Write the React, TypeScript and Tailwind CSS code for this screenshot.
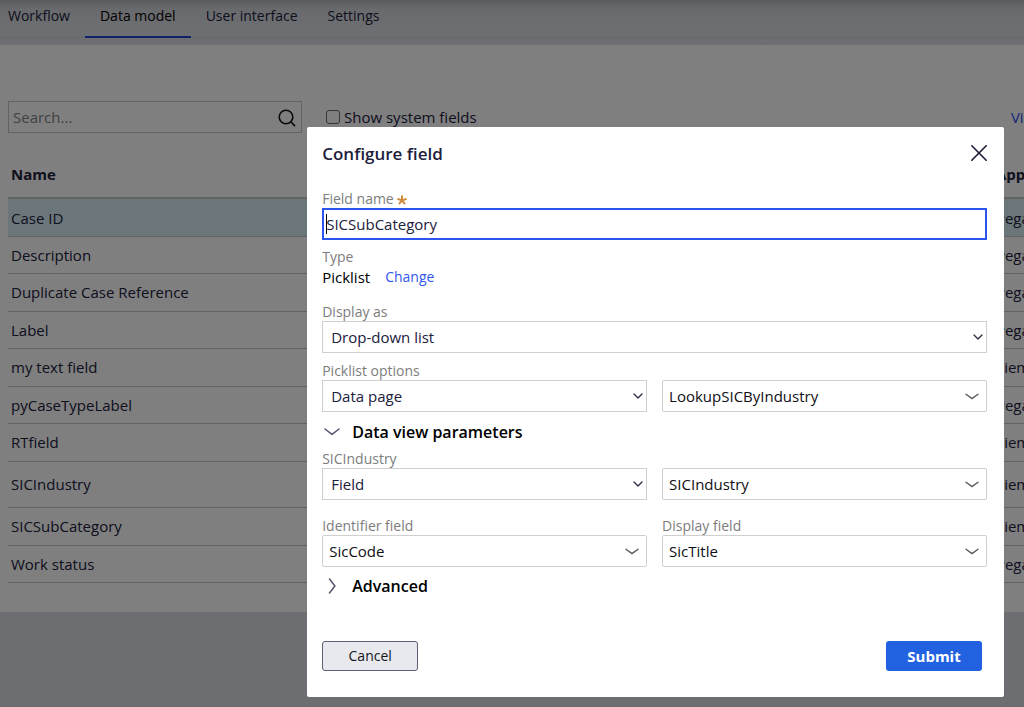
import { useState } from "react";

const tabs = ["Workflow", "Data model", "User interface", "Settings"];

const rows = [
  { name: "Case ID", layer: "Pega", selected: true },
  { name: "Description", layer: "Pega" },
  { name: "Duplicate Case Reference", layer: "Pega" },
  { name: "Label", layer: "Pega" },
  { name: "my text field", layer: "Siem" },
  { name: "pyCaseTypeLabel", layer: "Pega" },
  { name: "RTfield", layer: "Siem" },
  { name: "SICIndustry", layer: "Siem", tall: true },
  { name: "SICSubCategory", layer: "Siem" },
  { name: "Work status", layer: "Pega" },
];

function SmallChevron() {
  return (
    <svg viewBox="0 0 10 6" className="pointer-events-none absolute right-1 top-[13px] h-[6px] w-[10px]" fill="none" stroke="#2b2b45" strokeWidth="1.3" strokeLinecap="round" strokeLinejoin="round">
      <path d="M1 1l4 4 4-4" />
    </svg>
  );
}

function WideChevron() {
  return (
    <svg viewBox="0 0 14 7" className="pointer-events-none absolute right-2 top-[13px] h-[7px] w-[14px]" fill="none" stroke="#5c5c5c" strokeWidth="1.4" strokeLinecap="round" strokeLinejoin="round">
      <path d="M1 1.2l6 4.4 6-4.4" />
    </svg>
  );
}

type PickerProps = {
  id: string;
  label?: string;
  ariaLabel?: string;
  value: string;
  wide?: boolean;
};

function Picker({ id, label, ariaLabel, value, wide }: PickerProps) {
  return (
    <div className="flex min-w-0 flex-1 flex-col justify-end">
      {label && (
        <label htmlFor={id} className="text-sm leading-[18px] text-[#7d7d7d]">
          {label}
        </label>
      )}
      <div className="relative">
        <select
          id={id}
          aria-label={ariaLabel}
          className={
            wide
              ? "block h-8 w-full appearance-none rounded-[2px] border border-[#cfcfcf] bg-white pl-[6px] pr-7 text-[15px] text-[#0f0f14] outline-none"
              : "block h-8 w-full appearance-none border border-[#cfcfcf] bg-white pl-2 pr-6 text-[15px] text-[#20203c] outline-none"
          }
        >
          <option>{value}</option>
        </select>
        {wide ? <WideChevron /> : <SmallChevron />}
      </div>
    </div>
  );
}

function DataModelPage() {
  return (
    <div className="min-h-screen overflow-hidden bg-[#dadce2]">
      <header className="h-[45px] bg-linear-to-b from-[#b4b5b9] via-[#d2d4d9] via-20% to-[#dadce2] to-60%">
        <nav className="flex h-[38px] border-b border-[#cfd1d1]">
          {tabs.map((tab) => (
            <a
              key={tab}
              href="#"
              className={
                tab === "Data model"
                  ? "h-[38px] border-b-2 border-[#2343d8] px-[15px] pt-[6px] text-sm leading-5 text-black"
                  : "h-[38px] px-[15px] pt-[6px] text-sm leading-5 text-[#20203c] first:pl-2"
              }
            >
              {tab}
            </a>
          ))}
        </nav>
      </header>
      <main className="h-[567px] bg-white">
        <div className="w-[108%] pl-2 pt-[56px]">
          <div className="flex h-8 items-center">
            <div className="relative w-[294px]">
              <input
                type="search"
                aria-label="Search"
                placeholder="Search..."
                className="block h-8 w-full border border-[#c4c4c4] bg-transparent pl-1 pr-8 text-[15px] outline-none placeholder:text-[#858585]"
              />
              <svg viewBox="0 0 18 18" className="absolute right-[6px] top-2 h-[18px] w-[18px]" fill="none" stroke="#15151c" strokeWidth="1.6" strokeLinecap="round">
                <circle cx="8" cy="8" r="6.8" />
                <path d="M13 13l3.6 3.6" />
              </svg>
            </div>
            <label className="ml-6 flex items-center gap-1 text-[15px] text-[#20203c]">
              <input type="checkbox" className="h-[14px] w-[14px] appearance-none rounded-[3px] border border-[#6a6a6a]" />
              Show system fields
            </label>
            <a href="#" className="ml-auto w-[95px] text-[15px] text-[#2b4df0]">
              View
            </a>
          </div>
          <table className="mt-4 w-full table-fixed border-collapse text-left text-[15px] text-[#20203c]">
            <thead>
              <tr className="h-[49px] border-b-2 border-[#c4c4c4]">
                <th className="px-[3px] pt-[2px] font-bold">Name</th>
                <th className="w-[113px] px-[3px] pt-[2px] font-bold">App</th>
              </tr>
            </thead>
            <tbody>
              {rows.map((row) => (
                <tr
                  key={row.name}
                  className={
                    row.tall
                      ? "h-[46px] border-b border-[#c4c4c4]"
                      : row.selected
                        ? "h-[38px] border-b border-[#c4c4c4] bg-[#d7edf5]"
                        : "h-[37px] border-b border-[#c4c4c4] odd:h-[38px]"
                  }
                >
                  <td className="px-[3px] pt-px">{row.name}</td>
                  <td className="px-[3px] pt-px">{row.layer}</td>
                </tr>
              ))}
            </tbody>
          </table>
        </div>
      </main>
    </div>
  );
}

function ConfigureDialog() {
  const [name, setName] = useState("SICSubCategory");
  return (
    <div role="dialog" aria-modal="true" aria-labelledby="dialog-title" className="min-w-0 flex-1 self-start rounded-[2px] bg-white pb-[26px] pl-[15px] pr-[17px]">
      <div className="flex h-[63px] items-start justify-between pt-[15px]">
        <h2 id="dialog-title" className="text-[17px] font-semibold leading-6 text-[#20203c]">
          Configure field
        </h2>
        <button type="button" aria-label="Close" className="mt-[3px]">
          <svg viewBox="0 0 16 16" className="h-4 w-4" fill="none" stroke="#1b1b38" strokeWidth="1.6" strokeLinecap="round">
            <path d="M0.8 0.8l14.4 14.4M15.2 0.8L0.8 15.2" />
          </svg>
        </button>
      </div>

      <div className="flex items-center gap-[3px]">
        <label htmlFor="field-name" className="text-sm leading-[18px] text-[#7d7d7d]">
          Field name
        </label>
        <svg viewBox="0 0 10 10" className="mt-[2px] h-[10px] w-[10px]" fill="none" stroke="#cf8a3c" strokeWidth="2" strokeLinecap="round">
          <path d="M5 5.2V1.3M5 5.2l3.8-1.1M5 5.2l2.4 3.2M5 5.2L2.6 8.4M5 5.2L1.2 4.1" />
        </svg>
      </div>
      <div className="relative">
        <input
          id="field-name"
          value={name}
          onChange={(e) => setName(e.target.value)}
          className="block h-8 w-full border-2 border-[#2e54ee] bg-white pl-[2px] text-[15px] text-[#20203c] outline-none"
        />
        <span className="absolute left-1 top-[6px] h-5 w-px bg-black" />
      </div>

      <div className="mt-2 text-sm leading-[18px] text-[#7d7d7d]">Type</div>
      <div className="flex gap-[15px] text-[15px] leading-[22px] text-black">
        <span>Picklist</span>
        <a href="#" className="text-sm leading-[22px] text-[#3157f0]">
          Change
        </a>
      </div>

      <div className="mt-[15px] flex">
        <Picker id="display-as" label="Display as" value="Drop-down list" />
      </div>
      <div className="mt-[9px] flex gap-[15px]">
        <Picker id="picklist-options" label="Picklist options" value="Data page" />
        <Picker id="data-page" ariaLabel="Data page" value="LookupSICByIndustry" wide />
      </div>

      <button type="button" aria-expanded="true" className="flex h-[38px] items-center gap-3 pl-[2px] pt-px text-base font-semibold text-black">
        <svg viewBox="0 0 16 8" className="h-2 w-4" fill="none" stroke="#56566e" strokeWidth="1.5" strokeLinecap="round" strokeLinejoin="round">
          <path d="M1 1l7 5.4L15 1" />
        </svg>
        Data view parameters
      </button>

      <div className="flex gap-[15px]">
        <Picker id="sic-industry" label="SICIndustry" value="Field" />
        <Picker id="sic-industry-field" ariaLabel="SICIndustry field" value="SICIndustry" wide />
      </div>
      <div className="mt-[17px] flex gap-[15px]">
        <Picker id="identifier" label="Identifier field" value="SicCode" wide />
        <Picker id="display-field" label="Display field" value="SicTitle" wide />
      </div>

      <button type="button" aria-expanded="false" className="flex h-[38px] items-center gap-3 pl-[2px] text-base font-semibold text-black">
        <svg viewBox="0 0 16 16" className="h-4 w-4" fill="none" stroke="#56566e" strokeWidth="1.5" strokeLinecap="round" strokeLinejoin="round">
          <path d="M5.5 1l5.4 7-5.4 7" />
        </svg>
        Advanced
      </button>

      <div className="mt-9 flex justify-between pr-[5px]">
        <button type="button" className="h-[30px] w-24 rounded-[3px] border border-[#5c5e75] bg-[#e8e9ee] text-sm text-[#15151c]">
          Cancel
        </button>
        <button type="button" className="h-[30px] w-24 rounded-[3px] bg-[#2262e0] text-[15px] font-bold text-white">
          Submit
        </button>
      </div>
    </div>
  );
}

export default function App() {
  return (
    <div className="font-['Open_Sans',sans-serif]">
      <DataModelPage />
      <div className="fixed inset-0 flex bg-black/50 pl-[30%] pr-5 pt-[127px]">
        <ConfigureDialog />
      </div>
    </div>
  );
}
